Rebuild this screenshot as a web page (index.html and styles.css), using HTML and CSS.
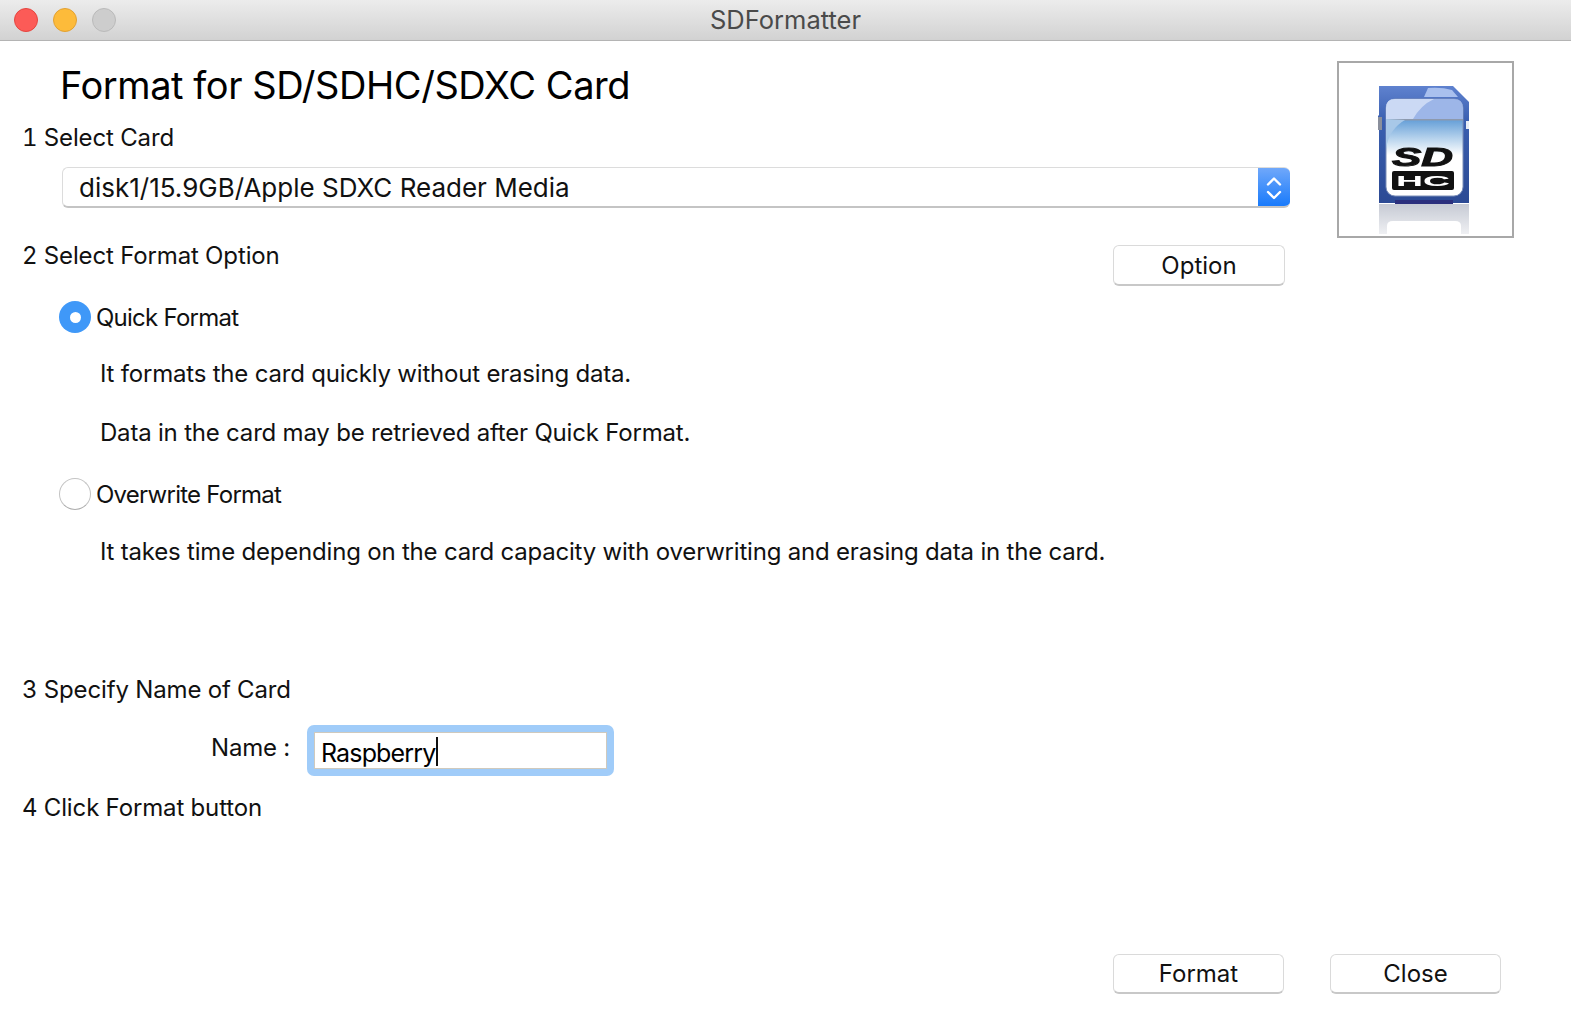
FILE: index.html
```html
<!DOCTYPE html>
<html lang="en">
<head>
<meta charset="utf-8">
<title>SDFormatter</title>
<link rel="stylesheet" href="styles.css">
</head>
<body>
<div class="window">
  <header class="titlebar">
    <div class="lights">
      <span class="light light-close"></span>
      <span class="light light-min"></span>
      <span class="light light-zoom"></span>
    </div>
    <div class="title">SDFormatter</div>
  </header>
  <div class="content">
    <div class="top">
      <main class="main">
        <h1 class="heading">Format for SD/SDHC/SDXC Card</h1>
        <div class="label label-1">1 Select Card</div>
        <div class="select">
          <span class="select-text">disk1/15.9GB/Apple SDXC Reader Media</span>
          <span class="select-arrows">
            <svg width="18" height="30" viewBox="0 0 18 30" fill="none" stroke="#fff" stroke-width="2.4" stroke-linecap="round" stroke-linejoin="round"><path d="M3 11.5 9 5.5 15 11.5"/><path d="M3 19 9 25 15 19"/></svg>
          </span>
        </div>
        <div class="option-row">
          <div class="label">2 Select Format Option</div>
          <div class="button button-option">Option</div>
        </div>
        <div class="radio-row radio-quick"><span class="radio radio-on"></span><span class="radio-label">Quick Format</span></div>
        <p class="para para-a">It formats the card quickly without erasing data.</p>
        <p class="para para-b">Data in the card may be retrieved after Quick Format.</p>
        <div class="radio-row radio-over"><span class="radio"></span><span class="radio-label">Overwrite Format</span></div>
        <p class="para para-c">It takes time depending on the card capacity with overwriting and erasing data in the card.</p>
      </main>
      <aside class="picture">
        <svg class="card-art" viewBox="1339 64 172 171" width="172" height="171">
          <defs>
            <linearGradient id="cardBody" x1="0" y1="0" x2="0" y2="1">
              <stop offset="0" stop-color="#5f82cf"/>
              <stop offset="0.3" stop-color="#3a5fb0"/>
              <stop offset="1" stop-color="#2c4a94"/>
            </linearGradient>
            <linearGradient id="cardWindow" x1="0" y1="0" x2="0" y2="1">
              <stop offset="0.2" stop-color="#5f9bd6"/>
              <stop offset="0.42" stop-color="#bcd6ee"/>
              <stop offset="0.58" stop-color="#ffffff"/>
            </linearGradient>
            <linearGradient id="reflect" x1="0" y1="0" x2="0" y2="1">
              <stop offset="0" stop-color="#c6cad4"/>
              <stop offset="1" stop-color="#eff0f3"/>
            </linearGradient>
          </defs>
          <rect x="1379" y="205" width="90" height="30" fill="url(#reflect)"/>
          <path d="M1387 235v-8q0-5 6-5h62q6 0 6 5v8z" fill="#fff"/>
          <path d="M1379 87h74l16 16v101h-90v-74l-1-1v-12l1-1z" fill="url(#cardBody)"/>
          <rect x="1395" y="201" width="58" height="4" fill="#2b2f7d"/>
          <rect x="1378" y="118" width="4" height="13" fill="#8a8f9c"/>
          <rect x="1466" y="122" width="3" height="8" fill="#e8ecf4"/>
          <rect x="1386" y="100" width="77" height="97" rx="9" fill="url(#cardWindow)" stroke="#7c8fb8" stroke-width="1"/>
          <path d="M1386 120v-11q0-9 9-9h59q9 0 9 9v11z" fill="#9db6e8"/>
          <path d="M1386 120v-11q0-9 9-9h39q-13 6-21 20z" fill="#cbd9f4"/>
          <path d="M1428 89q14-1 24 2l6 7h-34z" fill="#a9c0ee"/>
          <rect x="1386" y="120" width="77" height="1.5" fill="#8d99ad"/>
          <path d="M1386 150q3-20 19-29l-19-1z" fill="#a8c8e8"/>
          <text class="sd-text" x="1392" y="167" textLength="61" lengthAdjust="spacingAndGlyphs">SD</text>
          <rect x="1392" y="172" width="62" height="19" rx="2" fill="#111"/>
          <text class="hc-text" x="1396" y="187" textLength="54" lengthAdjust="spacingAndGlyphs">HC</text>
        </svg>
      </aside>
    </div>
    <div class="label label-3">3 Specify Name of Card</div>
    <div class="name-row">
      <span class="name-label">Name :</span>
      <div class="name-ring"><div class="name-input"><span>Raspberry</span><span class="caret"></span></div></div>
    </div>
    <div class="label label-4">4 Click Format button</div>
    <div class="footer">
      <div class="button">Format</div>
      <div class="button">Close</div>
    </div>
  </div>
</div>
</body>
</html>
```

FILE: styles.css
```css
* { box-sizing: border-box; }
html, body { margin: 0; padding: 0; height: 100%; background: #fff; }
body { font-family: Inter, "Liberation Sans", sans-serif; color: #111; overflow: hidden; }

.window { height: 1024px; display: flex; flex-direction: column; }

.titlebar {
  height: 41px; flex: none; display: flex; align-items: center; position: relative;
  background: linear-gradient(#ececec, #d2d2d2);
  border-bottom: 1px solid #b4b4b4;
}
.lights { display: flex; gap: 15px; padding-left: 14px; }
.light { width: 24px; height: 24px; border-radius: 50%; border: 1px solid; }
.light-close { background: #fc5b57; border-color: #e5453f; }
.light-min { background: #fdbb3a; border-color: #e2a132; }
.light-zoom { background: #cdcdcd; border-color: #bababa; }
.title {
  position: absolute; left: 0; right: 0; top: 0; height: 40px; line-height: 40px;
  text-align: center; font-size: 25.5px; color: #4a4a4a;
}

.content { flex: 1; display: flex; flex-direction: column; padding-left: 22px; padding-right: 70px; padding-bottom: 30px; }
.top { display: flex; align-items: flex-start; }
.main { width: 1268px; flex: none; }

.heading { margin: 0 0 0 38px; padding-top: 20px; font-size: 38px; font-weight: 400; line-height: 48px; color: #000; letter-spacing: -0.43px; }

.label { font-size: 24px; line-height: 28px; letter-spacing: -0.12px; font-feature-settings: "tnum"; }
.label-1 { margin-top: 15px; }
.label-3 { margin-top: 110px; }
.label-4 { margin-top: 18px; }

.select {
  margin: 15px 0 0 40px; height: 41px; display: flex; justify-content: space-between; align-items: stretch;
  border: 1px solid #dcdcdc; border-bottom: 2px solid #c4c4c4; border-right: none; border-radius: 6px; overflow: hidden;
}
.select-text { font-size: 26px; line-height: 39px; padding-left: 16px; }
.select-arrows { width: 32px; margin: -1px 0 -2px; display: flex; align-items: center; justify-content: center; background: linear-gradient(#72a9fa, #1478fb); }

.option-row { display: flex; justify-content: space-between; align-items: flex-start; margin-top: 34px; padding-right: 5px; }

.button {
  width: 171px; height: 40px; display: flex; align-items: center; justify-content: center;
  background: #fff; border: 1px solid #dadada; border-bottom: 2px solid #c8c8c8; border-radius: 6px;
  font-size: 24px; color: #111;
}
.button-option { margin-top: 3px; height: 41px; width: 172px; }

.radio-row { display: flex; align-items: center; height: 32px; margin-left: 37px; }
.radio-quick { margin-top: 15px; }
.radio-over { margin-top: 31px; }
.radio { width: 32px; height: 32px; border-radius: 50%; flex: none; background: #fff; border: 1px solid #c4c4c4; border-bottom-color: #aeaeae; display: flex; align-items: center; justify-content: center; }
.radio-on { background: #3f98f8; border: none; }
.radio-on::after { content: ""; width: 11px; height: 11px; border-radius: 50%; background: #fff; }
.radio-label { font-size: 24px; margin-left: 5px; letter-spacing: -0.75px; }

.para { margin: 0 0 0 78px; font-size: 24px; line-height: 28px; white-space: nowrap; letter-spacing: -0.2px; }
.para-a { margin-top: 27px; }
.para-b { margin-top: 31px; }
.para-c { margin-top: 28px; }

.picture { width: 177px; height: 177px; flex: none; margin: 20px 0 0 47px; border: 2px solid #a8a8a8; background: #fff; }
.card-art { display: block; filter: blur(0.5px); }
.sd-text { font-family: "Liberation Sans", sans-serif; font-size: 26px; font-weight: 700; font-style: italic; fill: #111; stroke: #111; stroke-width: 1px; }
.hc-text { font-family: "Liberation Sans", sans-serif; font-size: 15px; font-weight: 700; fill: #fff; }

.name-row { display: flex; align-items: flex-start; margin-top: 21px; }
.name-label { font-size: 24px; line-height: 28px; margin: 9px 0 0 189px; width: 96px; letter-spacing: -0.2px; }
.name-ring { width: 307px; height: 51px; padding: 7px 7px; background: #a0ccf9; border-radius: 7px; }
.name-input { height: 37px; background: #fff; border: 1px solid #cfc9bd; display: flex; align-items: center; padding: 4px 0 0 6px; font-size: 25px; color: #000; letter-spacing: -0.85px; }
.caret { width: 2px; height: 29px; background: #111; margin: -2px 0 0 1px; }

.footer { margin-top: auto; display: flex; justify-content: flex-end; gap: 46px; }
```
